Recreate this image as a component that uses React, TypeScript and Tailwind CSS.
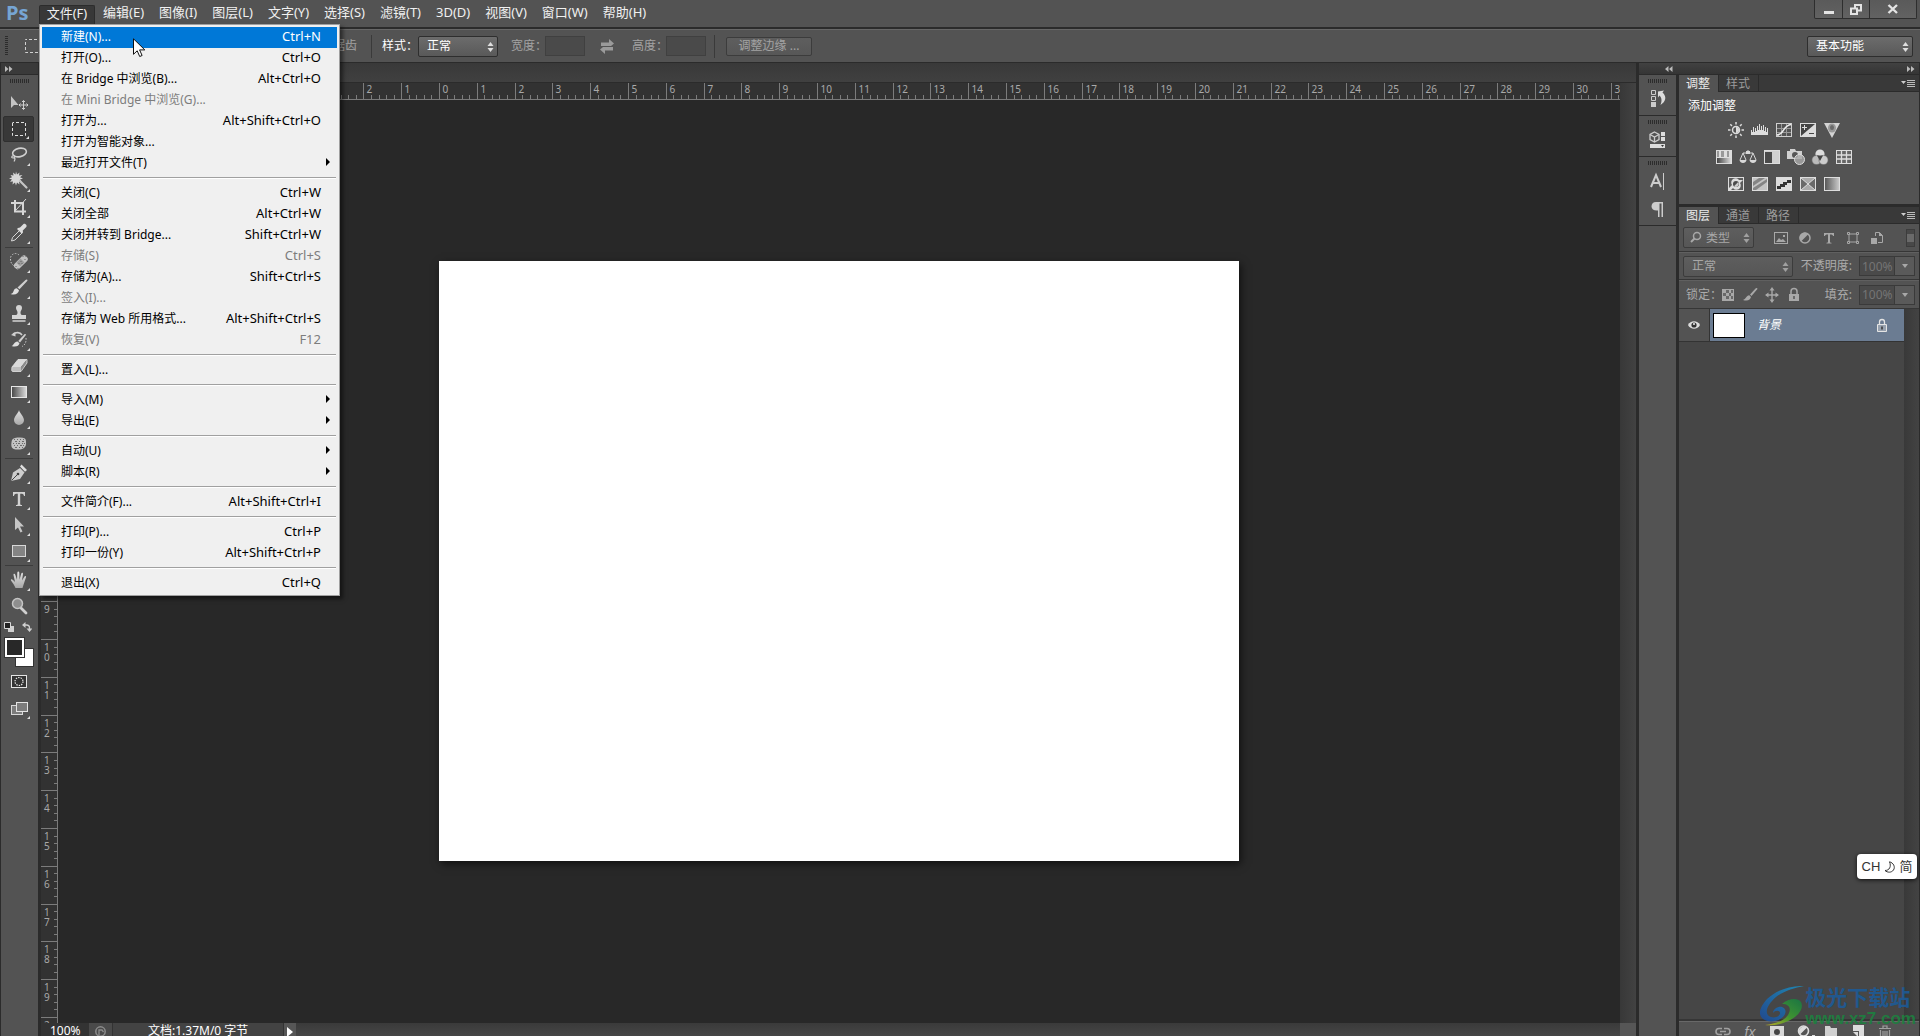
import { useId, type ReactNode } from "react";

/** Pixels per centimetre at 96 dpi and 100% zoom. */
const CM = 3780 / 100;

/** Distance from the start of each ruler to the document origin. */
const ORIGIN_X = 381;
const ORIGIN_Y = 161;

type MenuEntry = {
  label: string;
  keys?: string;
  disabled?: boolean;
  submenu?: boolean;
};

const MENU_TITLES = [
  "编辑(E)",
  "图像(I)",
  "图层(L)",
  "文字(Y)",
  "选择(S)",
  "滤镜(T)",
  "3D(D)",
  "视图(V)",
  "窗口(W)",
  "帮助(H)",
];

const FILE_MENU: MenuEntry[][] = [
  [
    { label: "新建(N)...", keys: "Ctrl+N" },
    { label: "打开(O)...", keys: "Ctrl+O" },
    { label: "在 Bridge 中浏览(B)...", keys: "Alt+Ctrl+O" },
    { label: "在 Mini Bridge 中浏览(G)...", disabled: true },
    { label: "打开为...", keys: "Alt+Shift+Ctrl+O" },
    { label: "打开为智能对象..." },
    { label: "最近打开文件(T)", submenu: true },
  ],
  [
    { label: "关闭(C)", keys: "Ctrl+W" },
    { label: "关闭全部", keys: "Alt+Ctrl+W" },
    { label: "关闭并转到 Bridge...", keys: "Shift+Ctrl+W" },
    { label: "存储(S)", keys: "Ctrl+S", disabled: true },
    { label: "存储为(A)...", keys: "Shift+Ctrl+S" },
    { label: "签入(I)...", disabled: true },
    { label: "存储为 Web 所用格式...", keys: "Alt+Shift+Ctrl+S" },
    { label: "恢复(V)", keys: "F12", disabled: true },
  ],
  [{ label: "置入(L)..." }],
  [
    { label: "导入(M)", submenu: true },
    { label: "导出(E)", submenu: true },
  ],
  [
    { label: "自动(U)", submenu: true },
    { label: "脚本(R)", submenu: true },
  ],
  [{ label: "文件简介(F)...", keys: "Alt+Shift+Ctrl+I" }],
  [
    { label: "打印(P)...", keys: "Ctrl+P" },
    { label: "打印一份(Y)", keys: "Alt+Shift+Ctrl+P" },
  ],
  [{ label: "退出(X)", keys: "Ctrl+Q" }],
];

/** Toolbox glyphs, each drawn on a 24x24 grid. */
const TOOL_GROUPS: { name: string; corner?: boolean; art: ReactNode }[][] = [
  [
    {
      name: "移动工具",
      corner: false,
      art: (
        <>
          <path d="M4 5v12l3-3h4.500z" fill="#c4c4c4" />
          <path
            d="M12 14h9M16.500 9.500v9M15 11l1.500-1.500L18 11M15 17l1.500 1.500L18 17M13.500 12.500L12 14l1.500 1.500M19.500 12.500L21 14l-1.500 1.500"
            stroke="#cfcfcf"
          />
        </>
      ),
    },
    {
      name: "矩形选框工具",
      art: <rect x="5.5" y="5.5" width="13" height="13" stroke="#e0e0e0" strokeDasharray="3 2" strokeDashoffset="1.5" />,
    },
    {
      name: "套索工具",
      art: (
        <g stroke="#d0d0d0" strokeWidth="1.600">
          <ellipse cx="12.500" cy="9.500" rx="7" ry="4.200" transform="rotate(-12 12.500 9.500)" />
          <path d="M6.500 12.500c-2 .5-2.500 2.500-.5 2.500s2-1.500.5-2.500M7.500 15c.8.800.5 2-.5 3.500" strokeWidth="1.200" />
        </g>
      ),
    },
    {
      name: "魔棒工具",
      art: (
        <>
          <path d="M9 2.500l1 3 2.500-2-.5 3 3.500-.5-2.500 2.300 3 1.200-3 1 2 2.300-3-.3.500 3-2.500-2-1 3-1-3-2.500 2 .5-3-3 .3 2-2.300-3-1 3-1.200L3.500 6l3 .5-.5-3 2.500 2z" fill="#d8d8d8" />
          <path d="M13 12l6.500 6.500" stroke="#c4c4c4" strokeWidth="2.200" strokeLinecap="round" />
        </>
      ),
    },
    {
      name: "裁剪工具",
      art: (
        <>
          <path d="M8 5v11.500h11M4 8h12v12" stroke="#d6d6d6" strokeWidth="2" />
          <path d="M9 15l10-11" stroke="#d6d6d6" />
        </>
      ),
    },
    {
      name: "吸管工具",
      art: (
        <>
          <path d="M4.500 20l1-3.500 7-7 2.500 2.500-7 7z" stroke="#d6d6d6" />
          <path d="M11 7l2-.5 3.500-3.500c1.500-1 4 1.200 2.800 3L15.800 9.500l.2 2-1.200 1.200L10 8z" fill="#dcdcdc" />
        </>
      ),
    },
  ],
  [
    {
      name: "污点修复画笔工具",
      art: (
        <>
          <path d="M12 5a5 5 0 00-8.500 4c0 3 1 5 3 6.500" stroke="#c8c8c8" strokeDasharray="1.500 1.500" />
          <rect x="5.500" y="9" width="16" height="7" rx="3" transform="rotate(-45 13.500 12)" fill="#c2c2c2" />
          <path d="M13.500 8.500l4 4-4.300 3.800-3.700-3.600z" fill="#9a9a9a" />
          <path d="M16 6v1M19 6v1M18 9v1M14 11v1M12 13v1M9 16v1M11 18v1M15 13v1" stroke="#666" />
        </>
      ),
    },
    {
      name: "画笔工具",
      art: (
        <>
          <path d="M20 3.500c.8.500.5 1.200 0 1.800l-7.500 8-2-1.700L18.500 4c.5-.5 1-.8 1.500-.5z" fill="#cfcfcf" />
          <path d="M9.800 12.200l2.200 2c-.5 3-3.500 5.500-8.500 3.800 2.500-.5 2.500-1.500 3.300-3.500.6-1.500 1.700-2.300 3-2.300z" fill="#e0e0e0" />
        </>
      ),
    },
    {
      name: "仿制图章工具",
      art: (
        <path d="M12 3a3 3 0 013 3c0 2-1.500 2.500-1.500 4.500 0 1.500.5 2.500 1.500 2.500h4v4H5v-4h4c1 0 1.500-1 1.500-2.500C10.500 8.500 9 8 9 6a3 3 0 013-3zM5.500 18.200h13v1.500h-13z" fill="#d4d4d4" />
      ),
    },
    {
      name: "历史记录画笔工具",
      art: (
        <>
          <path d="M6 6c3-2 7-2 9 1" stroke="#cfcfcf" strokeWidth="1.600" />
          <path d="M4 7l4.500-3v4.500z" fill="#cfcfcf" />
          <path d="M18.500 6c.6.500.5 1 0 1.500l-5.500 7-1.800-1.500 6-6.600c.5-.5 1-.6 1.300-.4z" fill="#cfcfcf" />
          <path d="M10.500 13.500l2 1.700c-.5 2.600-3.500 4.300-8 2.800 2.500-.5 2.500-4.500 6-4.500z" fill="#dedede" />
          <path d="M19 10c.5 4-1 7-4 8.500" stroke="#c8c8c8" strokeDasharray="1.500 1.500" />
        </>
      ),
    },
    {
      name: "橡皮擦工具",
      art: (
        <>
          <path d="M5 13l6-7.500h9L14 13z" fill="#dadada" />
          <path d="M5 13h9v4.500H6c-1.500 0-1.500-1-1-4.500z" fill="#bdbdbd" />
          <path d="M14 13l6-7.500v3.500l-6 8z" fill="#8c8c8c" />
          <path d="M5 13l6-7.500h9v3.500l-6 8.500H6c-1.500 0-1.500-1-1-4.500z" stroke="#e4e4e4" strokeWidth=".8" />
        </>
      ),
    },
    {
      name: "渐变工具",
      art: <rect x="4.5" y="6.5" width="15" height="11" fill="url(#ramp)" stroke="#e6e6e6" />,
    },
    {
      name: "模糊工具",
      art: <path d="M12 4c.5 3 5 6.500 5 10a5 5 0 01-10 0c0-3.500 4.500-7 5-10z" fill="url(#shade)" />,
    },
    {
      name: "海绵工具",
      art: (
        <>
          <path d="M5 8c1-2 4-2.500 8-2.500 4 0 6 1 6 3.500s.5 4-1 6-4 2.500-7 2.500-6-.5-6.500-3S4.500 10 5 8z" fill="#c2c2c2" />
          <path
            d="M7 7.500h1M10 7.500h1M13 7.500h1M16 7.500h1M8 9.500h2M12 9.500h1M15 9.500h2M6 11.500h1M9 11.500h1M11 11.500h2M15 11.500h1M17 11.500h1M7 13.500h1M10 13.500h1M13 13.500h2M16 13.500h1M8 15.500h2M12 15.500h1M15 15.500h1"
            stroke="#6c6c6c"
          />
        </>
      ),
    },
  ],
  [
    {
      name: "钢笔工具",
      art: (
        <>
          <path d="M4 20l2-8.500L13 7l4.500 4.500L13 18z" fill="#cdcdcd" />
          <path d="M14.500 3.500l5.500 5.500-2 1.800L13 5.500z" fill="#dedede" />
          <path d="M4.500 19.500l6-6" stroke="#444" />
          <circle cx="11" cy="13" r="1.300" fill="#444" />
        </>
      ),
    },
    {
      name: "横排文字工具",
      art: <path d="M6 5h12v4h-1c-.3-1.800-.8-2.300-3.800-2.300V17c0 .8.500 1 1.800 1v1H9v-1c1.300 0 1.800-.2 1.800-1V6.700C7.800 6.700 7.300 7.200 7 9H6z" fill="#d2d2d2" />,
    },
    {
      name: "路径选择工具",
      art: <path d="M8 4v13l3-2.500 2.500 5 2-1-2.500-5h4z" fill="#c6c6c6" />,
    },
    {
      name: "矩形工具",
      art: <rect x="5.5" y="6.5" width="13" height="11" fill="#848484" stroke="#d8d8d8" />,
    },
  ],
  [
    {
      name: "抓手工具",
      art: (
        <path d="M8.500 20c-1-3-3-5-4.500-7.500-.5-1.500 1-1.500 2-.5l2 2L6.500 7c-.2-1.500 1.300-1.700 1.800-.3l1.700 5 .3-7c.2-1.500 1.800-1.500 2 0l.2 7 1.700-6c.5-1.400 2-1 1.800.4L15 12.500l2.500-4c.7-1.200 2-.5 1.500.8-1 3.200-2 6-3.500 10.700z" fill="url(#shade)" />
      ),
    },
    {
      name: "缩放工具",
      corner: false,
      art: (
        <>
          <path d="M14 14l5 5" stroke="#d0d0d0" strokeWidth="2.800" strokeLinecap="round" />
          <circle cx="10.500" cy="9.500" r="5" fill="#8e8e8e" stroke="#c4c4c4" strokeWidth="1.500" />
        </>
      ),
    },
  ],
];

/** Adjustment layer glyphs on an 18x16 grid. */
const ADJUSTMENTS: { name: string; art: ReactNode }[][] = [
  [
    {
      name: "亮度/对比度",
      art: (
        <>
          <circle cx="9" cy="8" r="3.500" stroke="#ddd" strokeWidth="1.500" />
          <path d="M9 5v6a3 3 0 000-6z" fill="#ddd" />
          <path d="M9 0v2.500M9 13.500V16M1 8h2.500M14.500 8H17M3.300 2.300L5 4M13 12l1.700 1.700M14.700 2.300L13 4M5 12l-1.700 1.700" stroke="#ddd" strokeWidth="1.500" />
        </>
      ),
    },
    {
      name: "色阶",
      art: (
        <path d="M0 13V8h1v2h1V5h1v5h1V6h1v3h1V4h1v4h1V2h1v6h1V4h1v4h1V3h1v6h1V5h1v5h1V6h1v7z" fill="#ddd" />
      ),
    },
    {
      name: "曲线",
      art: (
        <>
          <rect x="1.500" y="1.500" width="15" height="13" stroke="#cfcfcf" />
          <path d="M6.500 2v12M11.500 2v12M2 6.500h14M2 10.500h14" stroke="#999" />
          <path d="M2 13c7 0 6-10 14-10.500" stroke="#eee" strokeWidth="1.500" />
        </>
      ),
    },
    {
      name: "曝光度",
      art: (
        <>
          <rect x="1.500" y="1.500" width="15" height="13" fill="#444" stroke="#ddd" />
          <path d="M2 14L16 2v12z" fill="#ddd" />
          <path d="M3 5.500h5M5.500 3v5" stroke="#ddd" />
          <path d="M10 11.500h5" stroke="#444" />
        </>
      ),
    },
    {
      name: "自然饱和度",
      art: (
        <>
          <path d="M1 1h16L9 16z" fill="#d4d4d4" />
          <ellipse cx="9" cy="6" rx="4" ry="4.500" fill="#999" />
          <ellipse cx="9" cy="5.500" rx="2" ry="2.500" fill="#6a6a6a" />
        </>
      ),
    },
  ],
  [
    {
      name: "色相/饱和度",
      art: (
        <>
          <rect x="1" y="1" width="16" height="14" fill="#ddd" />
          <path d="M2 2h2v6H2zM6 2h3v6H6zM12 2h2v6h-2z" fill="#999" />
          <rect x="2" y="9" width="14" height="5" fill="url(#ramp)" />
        </>
      ),
    },
    {
      name: "色彩平衡",
      art: (
        <>
          <path d="M9 1v3M4 4h10M4 4l-3 7M4 4l3 7M14 4l-3 7M14 4l3 7" stroke="#d8d8d8" />
          <path d="M.5 11h7c-.5 4-6.500 4-7 0zM10.500 11h7c-.5 4-6.500 4-7 0zM7 2h4v3H7z" fill="#d8d8d8" />
        </>
      ),
    },
    {
      name: "黑白",
      art: (
        <>
          <rect x="1.500" y="1.500" width="15" height="13" fill="#d0d0d0" stroke="#ddd" />
          <rect x="2" y="3" width="7" height="11" fill="#4a4a4a" />
        </>
      ),
    },
    {
      name: "照片滤镜",
      art: (
        <>
          <path d="M0 2h3V0h5l1 2h6v8H0z" fill="#d0d0d0" />
          <circle cx="8" cy="6" r="3" fill="#555" />
          <circle cx="12.500" cy="10.500" r="5" fill="#aaa" fillOpacity=".8" stroke="#ddd" />
        </>
      ),
    },
    {
      name: "通道混合器",
      art: (
        <>
          <circle cx="9" cy="5" r="4.600" fill="#ddd" />
          <circle cx="5.500" cy="11" r="4.600" fill="#bbb" stroke="#666" strokeWidth=".6" />
          <circle cx="12.500" cy="11" r="4.600" fill="#ccc" stroke="#666" strokeWidth=".6" />
          <path d="M6 6.500h6L9 12z" fill="#444" />
        </>
      ),
    },
    {
      name: "颜色查找",
      art: (
        <>
          <rect x="1.500" y="1.500" width="15" height="13" fill="#666" stroke="#ddd" />
          <path d="M6.500 2v12M11.500 2v12M2 6h14M2 10h14" stroke="#ddd" strokeWidth="1.300" />
        </>
      ),
    },
  ],
  [
    {
      name: "反相",
      art: (
        <>
          <rect x="1.500" y="1.500" width="15" height="13" fill="#5c5c5c" stroke="#ddd" />
          <path d="M2 14v-2l3-3a4 4 0 017-5h4l-3 3a4 4 0 01-7 5l-2 2z" fill="#ddd" />
          <circle cx="9" cy="8" r="3" fill="#4a4a4a" />
          <path d="M7 10.200L11.200 6a3 3 0 01-4.200 4.200z" fill="#ccc" />
        </>
      ),
    },
    {
      name: "色调分离",
      art: (
        <>
          <rect x="1.500" y="1.500" width="15" height="13" fill="#c4c4c4" stroke="#ddd" />
          <path d="M2 10L14 2H8L2 6zM2 14h3l11-8V3L2 12z" fill="#858585" />
        </>
      ),
    },
    {
      name: "阈值",
      art: (
        <>
          <rect x="1.500" y="1.500" width="15" height="13" fill="#ddd" stroke="#ddd" />
          <path d="M2 10h3V8h3V6h4V4h4v3h-4v2h-2v2H6v2H2z" fill="#333" />
        </>
      ),
    },
    {
      name: "可选颜色",
      art: (
        <>
          <rect x="1.500" y="1.500" width="15" height="13" fill="#aaa" stroke="#ddd" />
          <path d="M2 2l7 6-7 6zM16 2L9 8l7 6z" fill="#6a6a6a" />
          <path d="M2 2l14 12M16 2L2 14" stroke="#ddd" />
        </>
      ),
    },
    {
      name: "渐变映射",
      art: <rect x="1.500" y="1.500" width="15" height="13" fill="url(#rampFlip)" stroke="#ddd" />,
    },
  ],
];

/** Gradients shared by every glyph on the page. */
function SharedDefs() {
  return (
    <svg className="absolute size-0" aria-hidden="true">
      <defs>
        <linearGradient id="ramp">
          <stop offset="0" stopColor="#444" />
          <stop offset="1" stopColor="#ddd" />
        </linearGradient>
        <linearGradient id="rampFlip">
          <stop offset="0" stopColor="#555" />
          <stop offset="1" stopColor="#ccc" />
        </linearGradient>
        <linearGradient id="shade" x2="0" y2="1">
          <stop offset="0" stopColor="#e2e2e2" />
          <stop offset="1" stopColor="#a8a8a8" />
        </linearGradient>
      </defs>
    </svg>
  );
}

function Glyph({ w, h, className = "", children }: { w: number; h: number; className?: string; children: ReactNode }) {
  return (
    <svg width={w} height={h} viewBox={`0 0 ${w} ${h}`} fill="none" className={`shrink-0 ${className}`} aria-hidden="true">
      {children}
    </svg>
  );
}

function Grip() {
  return <div className="h-1 w-5 bg-[repeating-linear-gradient(90deg,#2c2c2c_0_1px,transparent_1px_2px)]" />;
}

/** Drop-down with the small up/down arrow pair on its right. */
function Picker({
  label,
  value,
  className,
  pad = "pl-2",
  muted,
}: {
  label: string;
  value: string;
  className: string;
  pad?: string;
  muted?: boolean;
}) {
  return (
    <div className={`relative h-[21px] shrink-0 ${className}`}>
      <select
        aria-label={label}
        className={`h-full w-full appearance-none rounded-xs border bg-linear-to-b ${pad} text-xs leading-none ${
          muted
            ? "border-[#3c3c3c] from-[#5e5e5e] to-[#565656] text-[#a8a8a8]"
            : "border-[#2e2e2e] from-[#6c6c6c] to-[#595959] text-white"
        }`}
      >
        <option>{value}</option>
      </select>
      <Glyph w={7} h={10} className={`pointer-events-none absolute top-[6px] right-[4px] ${muted ? "text-[#a0a0a0]" : "text-[#dedede]"}`}>
        <path d="M3.500 0L6.500 4h-6zM3.500 10L.5 6h6z" fill="currentColor" />
      </Glyph>
    </div>
  );
}

function FileMenu() {
  return (
    <div
      role="menu"
      className="absolute top-full left-0 z-20 w-[301px] border border-[#a0a0a0] bg-[#f0f0f0] px-[2px] pt-[2px] pb-px text-xs shadow-[3px_3px_4px_rgba(0,0,0,0.5)]"
    >
      {FILE_MENU.map((group, g) => (
        <div key={g}>
          {g > 0 && (
            <div className="h-[9px] pt-[3px]">
              <hr className="mx-px h-[2px] border-t border-b border-t-[#a0a0a0] border-b-white" />
            </div>
          )}
          {group.map((item, i) => (
            <button
              key={item.label}
              role="menuitem"
              disabled={item.disabled}
              className={`relative flex h-[21px] w-full items-center justify-between pr-4 pb-[2px] pl-[19px] ${
                g === 0 && i === 0 ? "bg-[#0078d7] text-white" : item.disabled ? "text-[#7d7d7d]" : "text-black"
              }`}
            >
              <span>{item.label}</span>
              {item.keys && <span className="text-[13px]">{item.keys}</span>}
              {item.submenu && (
                <Glyph w={4} h={8} className="absolute top-[5px] right-[7px]">
                  <path d="M0 0l4 4-4 4z" fill="#000" />
                </Glyph>
              )}
            </button>
          ))}
        </div>
      ))}
      <Glyph w={13} h={20} className="pointer-events-none absolute top-[13px] left-[93px]">
        <path d="M.5 .8v15.500l3.700-3.500 2.500 5.700 2.400-1-2.500-5.600h5.200z" fill="#fff" stroke="#111" />
      </Glyph>
    </div>
  );
}

function TitleBar() {
  return (
    <header className="flex h-[29px] shrink-0 items-start border-b-2 border-[#2b2b2b] bg-[#535353] text-[13px] text-[#f0f0f0]">
      <div className="h-[27px] w-[39px] pl-[6px] font-['Open_Sans',sans-serif] text-xl leading-[26px] font-bold text-[#76a5d3]">
        Ps
      </div>
      <nav className="flex pt-1">
        <div className="relative mr-px">
          <button className="h-[19px] w-14 rounded-t-xs border border-b-0 border-[#2c2c2c] bg-[#383838] pb-[3px] leading-none">
            文件(F)
          </button>
          <FileMenu />
        </div>
        {MENU_TITLES.map((title) => (
          <button key={title} className="h-[19px] pr-2 pb-[2px] pl-[7px] leading-none">
            {title}
          </button>
        ))}
      </nav>
      <div className="mr-[3px] ml-auto flex h-[19px] rounded-b-xs border border-t-0 border-[#2e2e2e] bg-linear-to-b from-[#5a5a5a] to-[#626262]">
        <button aria-label="最小化" className="flex w-7 items-center justify-center border-r border-[#2e2e2e]">
          <Glyph w={10} h={12}>
            <path d="M0 8h10v3H0z" fill="#e4e4e4" />
          </Glyph>
        </button>
        <button aria-label="还原" className="flex w-[27px] items-center justify-center border-r border-[#2e2e2e]">
          <Glyph w={12} h={11}>
            <path d="M5 1h6v5.500H5z" stroke="#e4e4e4" strokeWidth="2" />
            <path d="M1 4.500h6V10H1z" fill="#5c5c5c" stroke="#e4e4e4" strokeWidth="2" />
          </Glyph>
        </button>
        <button aria-label="关闭" className="flex w-[46px] items-center justify-center">
          <Glyph w={12} h={10}>
            <path d="M1.500 1l8.500 8M10 1L1.500 9" stroke="#e4e4e4" strokeWidth="2.400" />
          </Glyph>
        </button>
      </div>
    </header>
  );
}

function SizeBox({ label }: { label: string }) {
  const id = useId();
  return (
    <>
      <label htmlFor={id} className="w-[34px] whitespace-nowrap">
        {label}
      </label>
      <input id={id} disabled className="h-5 w-10 border border-[#404040] bg-[#4a4a4a] px-1" />
    </>
  );
}

function OptionsBar() {
  return (
    <div className="flex h-[34px] shrink-0 items-center border-t border-b border-t-[#676767] border-b-[#2b2b2b] bg-[#535353] pl-[5px] text-xs whitespace-nowrap text-[#a3a3a3]">
      <div className="h-5 w-[3px] bg-[repeating-linear-gradient(180deg,#2c2c2c_0_1px,transparent_1px_2px)]" />
      <Glyph w={15} h={14} className="ml-[17px]">
        <rect x=".5" y=".5" width="14" height="13" stroke="#d0d0d0" strokeDasharray="3 2" strokeDashoffset="1.500" />
      </Glyph>
      <span className="w-[317px] text-right">消除锯齿</span>
      <span className="mr-[10px] ml-[14px] h-[23px] w-px bg-[#3a3a3a]" />
      <span className="w-9 text-white">样式：</span>
      <Picker label="样式" value="正常" className="mr-[13px] w-20" />
      <SizeBox label="宽度：" />
      <button aria-label="高度和宽度互换" className="mx-[14px] w-[19px]">
        <Glyph w={16} h={15}>
          <path d="M2 3.500h8V0l5 4.500-3 2.500H2zM14 11.500H6V15L1 10.500 4 8h10z" fill="#9a9a9a" />
        </Glyph>
      </button>
      <SizeBox label="高度：" />
      <span className="mr-[11px] ml-2 h-[23px] w-px bg-[#3a3a3a]" />
      <button className="h-[19px] w-[86px] rounded-xs border border-[#3c3c3c] bg-linear-to-b from-[#5e5e5e] to-[#575757] leading-none">
        调整边缘 ...
      </button>
      <Picker label="工作区" value="基本功能" className="mr-[7px] ml-auto w-[106px]" />
    </div>
  );
}

function ToolButton({ name, corner = true, active, children }: { name: string; corner?: boolean; active?: boolean; children: ReactNode }) {
  return (
    <button
      aria-label={name}
      className={`relative flex h-[26px] w-[31px] items-center justify-center ${
        active ? "rounded-xs border border-[#2f2f2f] bg-[#383838]" : ""
      }`}
    >
      <Glyph w={24} h={24}>
        {children}
      </Glyph>
      {corner && (
        <Glyph w={3} h={3} className="absolute right-[4px] bottom-[2px]">
          <path d="M3 0v3H0z" fill="#ddd" />
        </Glyph>
      )}
    </button>
  );
}

function Toolbox() {
  return (
    <aside className="flex w-[41px] shrink-0 flex-col border-r-[3px] border-l border-[#2b2b2b] bg-[#535353]">
      <div className="flex h-3 shrink-0 items-center border-b border-[#2b2b2b] bg-[#3a3a3a] pl-1">
        <Glyph w={8} h={6}>
          <path d="M0 0l3.500 3L0 6zM4 0l3.500 3L4 6z" fill="#bbb" />
        </Glyph>
      </div>
      <div className="flex h-[15px] shrink-0 justify-center pt-1">
        <Grip />
      </div>
      {TOOL_GROUPS.map((group, g) => (
        <div key={g} className="flex flex-col items-center pr-[2px]">
          {g > 0 && <hr className="my-px w-7 border-[#3c3c3c]" />}
          {group.map((tool) => (
            <ToolButton key={tool.name} name={tool.name} corner={tool.corner} active={tool.name === "矩形选框工具"}>
              {tool.art}
            </ToolButton>
          ))}
        </div>
      ))}
      <div className="flex h-[15px] shrink-0 items-center justify-between pr-[6px] pl-[3px]">
        <button aria-label="默认前景色和背景色">
          <Glyph w={10} h={10}>
            <path d="M4 4h6v6H4z" fill="#d0d0d0" />
            <path d="M.5 .5h6v6h-6z" fill="#222" stroke="#d8d8d8" />
          </Glyph>
        </button>
        <button aria-label="切换前景色和背景色">
          <Glyph w={10} h={10}>
            <path d="M2 3h2.500A3 3 0 017.500 6v2" stroke="#cfcfcf" strokeWidth="1.300" />
            <path d="M3.500 0v6L0 3zM4.500 6.500h6l-3 3.500z" fill="#cfcfcf" />
          </Glyph>
        </button>
      </div>
      <div className="grid shrink-0 grid-cols-[10px_9px_10px] grid-rows-[10px_9px_10px] self-start pt-1 pl-1">
        <button aria-label="背景色" className="col-span-2 col-start-2 row-span-2 row-start-2 border border-[#333] bg-white" />
        <button
          aria-label="前景色"
          className="col-span-2 col-start-1 row-span-2 row-start-1 border-2 border-white bg-[#282828] outline outline-[#333]"
        />
      </div>
      <div className="mt-[2px] flex flex-col items-center pr-[2px]">
        <ToolButton name="以快速蒙版模式编辑" corner={false}>
          <rect x="4.500" y="5.500" width="15" height="12" fill="#333" stroke="#e4e4e4" />
          <circle cx="12" cy="11.500" r="4" stroke="#eee" strokeWidth="1.200" strokeDasharray="1.400 1.100" />
        </ToolButton>
        <ToolButton name="更改屏幕模式">
          <rect x="4.500" y="9.500" width="11" height="9" fill="#7c7c7c" stroke="#d8d8d8" />
          <rect x="9.500" y="6.500" width="11" height="9" fill="#7c7c7c" stroke="#e4e4e4" />
        </ToolButton>
      </div>
    </aside>
  );
}

function range(from: number, to: number) {
  return Array.from({ length: to - from + 1 }, (_, i) => from + i);
}

const MINOR = [1, 2, 3, 4];

function HorizontalRuler() {
  return (
    <svg className="h-[17px] w-full min-w-0 border-b border-[#7a7a7a] bg-[#323232] font-['Noto_Sans',sans-serif] text-[10px]">
      {range(-3, 31).map((n) => {
        const x = Math.round(ORIGIN_X + n * CM) + 0.5;
        return (
          <g key={n} stroke="#7c7c7c">
            <path d={`M${x} 0v16`} />
            {MINOR.map((m) => {
              const mx = Math.round(ORIGIN_X + (n + m / 5) * CM) + 0.5;
              return <path key={m} d={`M${mx} 12v4`} />;
            })}
            <text x={x + 3} y={10} fill="#a9a9a9" stroke="none">
              {Math.abs(n)}
            </text>
          </g>
        );
      })}
    </svg>
  );
}

function VerticalRuler() {
  return (
    <svg className="h-full w-[17px] shrink-0 border-r border-[#7a7a7a] bg-[#323232] font-['Noto_Sans',sans-serif] text-[10px]">
      {range(9, 20).map((n) => {
        const y = Math.round(ORIGIN_Y + n * CM) + 0.5;
        return (
          <g key={n} stroke="#7c7c7c">
            <path d={`M0 ${y}h16`} />
            {MINOR.map((m) => {
              const my = Math.round(ORIGIN_Y + (n + m / 5) * CM) + 0.5;
              return <path key={m} d={`M13 ${my}h3`} />;
            })}
            {[...String(n)].map((digit, i) => (
              <text key={i} x={3} y={y + 11 + i * 10} fill="#a9a9a9" stroke="none">
                {digit}
              </text>
            ))}
          </g>
        );
      })}
    </svg>
  );
}

function StatusBar() {
  return (
    <div className="flex h-[13px] shrink-0 overflow-hidden bg-[#434343] text-xs leading-4 text-white">
      <span className="w-12 bg-[#333] pl-[9px]">100%</span>
      <button aria-label="文档预览" className="flex w-6 justify-center border-r border-[#333] bg-[#4a4a4a] pt-[3px]">
        <Glyph w={11} h={11}>
          <circle cx="5.500" cy="5.500" r="4.700" stroke="#8c8c8c" strokeWidth="1.500" />
          <path d="M4 9V4h3l1.500 2" stroke="#8c8c8c" strokeWidth="1.300" />
        </Glyph>
      </button>
      <span className="w-[170px] pl-[35px] whitespace-nowrap">文档:1.37M/0 字节</span>
      <button aria-label="状态栏选项" className="flex w-[13px] justify-center border-l border-[#333] bg-[#565656] pt-1">
        <Glyph w={6} h={10}>
          <path d="M0 0l6 5-6 5z" fill="#fff" />
        </Glyph>
      </button>
      <span className="flex-1 bg-linear-to-b from-[#3a3a3a] to-[#464646]" />
      <span className="w-4 bg-[#565656]" />
    </div>
  );
}

function DocumentWindow() {
  return (
    <main className="flex min-w-0 flex-1 flex-col">
      <div className="h-5 shrink-0 border-b border-[#2b2b2b] bg-linear-to-b from-[#393939] to-[#404040]" />
      <div className="flex min-h-0 flex-1">
        <div className="flex min-w-0 flex-1 flex-col">
          <div className="flex shrink-0">
            <div className="w-[17px] shrink-0 border-r border-b border-[#7a7a7a] bg-[#323232]" />
            <HorizontalRuler />
          </div>
          <div className="flex min-h-0 flex-1">
            <VerticalRuler />
            <div className="flex min-w-0 flex-1 items-center justify-center overflow-hidden bg-[#282828] pb-[2px]">
              <div className="h-[600px] w-[800px] shrink-0 bg-white shadow-[2px_3px_8px_rgba(0,0,0,0.6)]" />
            </div>
          </div>
        </div>
        <div className="w-4 shrink-0 bg-linear-to-r from-[#383838] to-[#424242]" />
      </div>
      <StatusBar />
    </main>
  );
}

function DockGroup({ items }: { items: { name: string; art: ReactNode }[] }) {
  return (
    <div className="flex flex-col items-center gap-1 border-b border-[#2b2b2b] py-1">
      <Grip />
      {items.map((item) => (
        <button key={item.name} aria-label={item.name} className="flex h-6 w-8 items-center justify-center">
          <Glyph w={18} h={18}>{item.art}</Glyph>
        </button>
      ))}
    </div>
  );
}

function IconDock() {
  return (
    <div className="w-10 shrink-0 border-r-[3px] border-[#2b2b2b] bg-[#535353]">
      <DockGroup
        items={[
          {
            name: "历史记录",
            art: (
              <>
                <path d="M2.500 .5h4v4h-4zM2.500 6.500h4v4h-4z" stroke="#ccc" />
                <path d="M2 12h5v5H2z" fill="#ccc" />
                <path d="M9 1.500l6-1-1.500 2c4.500 4 3.500 9-2 12.500 1.500-4 1.500-7-1-9.500L9 7.500z" fill="#ddd" />
              </>
            ),
          },
        ]}
      />
      <DockGroup
        items={[
          {
            name: "属性",
            art: (
              <>
                <path d="M5.500 1l4.500 2.500v5L5.500 11 1 8.500v-5z" stroke="#ccc" strokeWidth="1.300" />
                <path d="M1 3.500L5.500 6 10 3.500M5.500 6v5" stroke="#ccc" strokeWidth="1.300" />
                <path d="M12 1h4v4h-4zM12 6h4v4h-4zM1 13h15v4H1z" fill="#ddd" />
                <path d="M12 14h3l-1.500 2z" fill="#333" />
              </>
            ),
          },
        ]}
      />
      <DockGroup
        items={[
          {
            name: "字符",
            art: (
              <>
                <path d="M2 15L7 3l5 12M4 11h6.500" stroke="#ccc" strokeWidth="2" />
                <path d="M14.500 1v17" stroke="#ccc" />
              </>
            ),
          },
          {
            name: "段落",
            art: <path d="M7 2h7v15h-1.500V3.500H10.500V17H9v-6.500C5 11 2.500 9 2.500 6.500S4 2 7 2z" fill="#ccc" />,
          },
        ]}
      />
    </div>
  );
}

function PanelTabs({ tabs }: { tabs: string[] }) {
  return (
    <div className="flex h-[17px] shrink-0 bg-[#393939] text-xs leading-[17px]">
      {tabs.map((tab, i) => (
        <button
          key={tab}
          className={`w-10 border-r border-[#2b2b2b] pr-px whitespace-nowrap ${
            i === 0 ? "bg-[#535353] text-[#ececec]" : "border-b text-[#9c9c9c]"
          }`}
        >
          {tab}
        </button>
      ))}
      <div className="flex flex-1 items-center justify-end border-b border-[#2b2b2b] pr-1">
        <button aria-label="面板菜单">
          <Glyph w={14} h={9}>
            <path d="M0 2h5L2.500 5z" fill="#ccc" />
            <path d="M6 1.500h8M6 3.500h8M6 5.500h8M6 7.500h8" stroke="#bbb" />
          </Glyph>
        </button>
      </div>
    </div>
  );
}

function AdjustmentsPanel() {
  return (
    <section className="flex h-[132px] shrink-0 flex-col border-b-[3px] border-[#2b2b2b]">
      <PanelTabs tabs={["调整", "样式"]} />
      <h2 className="h-[30px] pl-[9px] text-xs leading-[27px] text-white">添加调整</h2>
      <div className="flex flex-col gap-[11px] pr-[31px]">
        {ADJUSTMENTS.map((row, i) => (
          <div key={i} className="flex justify-center gap-[6px]">
            {row.map((item) => (
              <button key={item.name} aria-label={item.name}>
                <Glyph w={18} h={16}>{item.art}</Glyph>
              </button>
            ))}
          </div>
        ))}
      </div>
    </section>
  );
}

function PercentBox({ label }: { label: string }) {
  const id = useId();
  return (
    <div className="ml-auto flex items-center">
      <label htmlFor={id} className="mr-[7px]">
        {label}
      </label>
      <input
        id={id}
        disabled
        defaultValue="100%"
        className="h-5 w-9 border border-[#3a3a3a] bg-[#4a4a4a] pl-[2px] text-[#757575]"
      />
      <button aria-label={`${label}选项`} className="flex h-5 w-5 items-center justify-center border border-l-0 border-[#3a3a3a] bg-[#5a5a5a]">
        <Glyph w={6} h={4}>
          <path d="M0 0h6L3 4z" fill="#a8a8a8" />
        </Glyph>
      </button>
    </div>
  );
}

const FILTERS: { name: string; art: ReactNode }[] = [
  {
    name: "像素图层滤镜",
    art: (
      <>
        <rect x=".5" y="1.500" width="13" height="11" stroke="#a8a8a8" />
        <path d="M2 11l3-4 2 2 2-1 3 3zM9 4h2v2H9z" fill="#a8a8a8" />
      </>
    ),
  },
  {
    name: "调整图层滤镜",
    art: (
      <>
        <circle cx="7" cy="7" r="5" stroke="#a8a8a8" strokeWidth="1.500" />
        <path d="M3 10.500L10.500 3A5 5 0 003 10.500z" fill="#a8a8a8" />
      </>
    ),
  },
  {
    name: "文字图层滤镜",
    art: <path d="M2 2h10v3h-1c-.2-1-.6-1.500-3-1.500V11c0 .6.500.8 1.500.8v.7h-5v-.7c1 0 1.500-.2 1.500-.8V3.500C3.600 3.500 3.200 4 3 5H2z" fill="#a8a8a8" />,
  },
  {
    name: "形状图层滤镜",
    art: (
      <>
        <path d="M3 3h8v8H3z" stroke="#a8a8a8" />
        <path d="M1.500 1.500h2v2h-2zM10.500 1.500h2v2h-2zM1.500 10.500h2v2h-2zM10.500 10.500h2v2h-2z" fill="#535353" stroke="#a8a8a8" />
      </>
    ),
  },
  {
    name: "智能对象滤镜",
    art: (
      <>
        <path d="M5.500 5V1.500h4l3 3v7H8" stroke="#a8a8a8" />
        <path d="M1 7h6v6H1zM9 1v4h4z" fill="#a8a8a8" />
      </>
    ),
  },
];

const LOCKS: { name: string; art: ReactNode }[] = [
  {
    name: "锁定透明像素",
    art: (
      <>
        <path d="M2 2h12v12H2z" fill="#a8a8a8" />
        <path d="M6 3h3v3H6zM11 3h2v3h-2zM3 6h3v3H3zM9 6h2v3H9zM6 9h3v3H6zM11 9h2v3h-2z" fill="#686868" />
      </>
    ),
  },
  {
    name: "锁定图像像素",
    art: (
      <path d="M15 1c.8.500.3 1.300-.2 1.800L9.500 9 8 7.500 13.500 1.500c.5-.5 1-.8 1.500-.5zM7.300 8.300L9 10c-.5 2.500-3 4.500-8 3 3-.5 3-4.500 6.300-4.700z" fill="#a8a8a8" />
    ),
  },
  {
    name: "锁定位置",
    art: (
      <>
        <path d="M8 2v12M2 8h12" stroke="#a8a8a8" strokeWidth="1.400" />
        <path d="M8 0l2.500 3.500h-5zM8 16l2.500-3.500h-5zM1 8l3.500-2.500v5zM15 8l-3.500-2.500v5z" fill="#a8a8a8" />
      </>
    ),
  },
  {
    name: "锁定全部",
    art: (
      <>
        <path d="M5 8V4.500a3 3 0 016 0V8" stroke="#a8a8a8" strokeWidth="1.500" />
        <path d="M3 7h10v7H3z" fill="#a8a8a8" />
        <path d="M8 9v3" stroke="#555" strokeWidth="1.500" />
      </>
    ),
  },
];

const LAYER_ACTIONS: { name: string; art: ReactNode }[] = [
  {
    name: "链接图层",
    art: <path d="M7 4.500H4a3 3 0 000 6h3M9 4.500h3a3 3 0 010 6H9M5 7.500h6" stroke="#a0a0a0" strokeWidth="1.600" />,
  },
  { name: "添加图层样式", art: null },
  {
    name: "添加图层蒙版",
    art: (
      <>
        <path d="M1 2h14v12H1z" fill="#d8d8d8" />
        <circle cx="8" cy="8" r="3" fill="#444" />
      </>
    ),
  },
  {
    name: "创建新的填充或调整图层",
    art: (
      <>
        <circle cx="7.500" cy="7" r="5" stroke="#dcdcdc" strokeWidth="1.600" />
        <path d="M4 10.500l7-7a5 5 0 00-7 7z" fill="#dcdcdc" />
        <path d="M16 11h3v3h-3z" fill="#ddd" />
      </>
    ),
  },
  { name: "创建新组", art: <path d="M2 2h5l1 2h6v10H2z" fill="#d0d0d0" /> },
  {
    name: "创建新图层",
    art: <path d="M3 1h11v13H9V7H3zM3 8h5v5z" fill="#dcdcdc" />,
  },
  {
    name: "删除图层",
    art: <path d="M2 4.500h12M6 4V2h4v2M3.500 6v9h9V6M6 7v8M8 7v8M10 7v8" stroke="#a0a0a0" strokeWidth="1.200" />,
  },
];

function LayersPanel() {
  return (
    <section className="flex min-h-0 flex-1 flex-col text-xs text-[#ababab]">
      <PanelTabs tabs={["图层", "通道", "路径"]} />

      <div className="flex h-7 shrink-0 items-center border-b border-[#363636] pr-1 pl-1">
        <div className="relative">
          <Picker label="图层滤镜类型" value="类型" className="w-[71px]" pad="pl-[22px]" muted />
          <Glyph w={12} h={12} className="pointer-events-none absolute top-[4px] left-[7px]">
            <circle cx="7" cy="5" r="3.500" stroke="#a8a8a8" strokeWidth="1.500" />
            <path d="M4.500 7.500L1 11" stroke="#a8a8a8" strokeWidth="2" />
          </Glyph>
        </div>
        <div className="ml-5 flex gap-[10px]">
          {FILTERS.map((f) => (
            <button key={f.name} aria-label={f.name}>
              <Glyph w={14} h={14}>{f.art}</Glyph>
            </button>
          ))}
        </div>
        <button aria-label="打开或关闭图层滤镜" className="ml-auto h-[18px] w-[9px] border border-[#3c3c3c] bg-[#484848]">
          <span className="block h-2 bg-[#6a6a6a]" />
        </button>
      </div>

      <div className="flex h-7 shrink-0 items-center border-t border-b border-t-[#606060] border-b-[#363636] pr-1 pl-1">
        <Picker label="混合模式" value="正常" className="w-[110px]" muted />
        <PercentBox label="不透明度:" />
      </div>

      <div className="flex h-7 shrink-0 items-center border-t border-t-[#606060] pr-1 pl-[7px] whitespace-nowrap">
        <span className="w-[34px]">锁定：</span>
        <div className="flex gap-[6px]">
          {LOCKS.map((l) => (
            <button key={l.name} aria-label={l.name}>
              <Glyph w={16} h={16}>{l.art}</Glyph>
            </button>
          ))}
        </div>
        <PercentBox label="填充:" />
      </div>

      <div className="flex min-h-0 flex-1 border-t border-b-2 border-[#363636] bg-[#464646]">
        <div className="flex-1">
          <div className="flex h-[33px] border-b border-[#333]">
            <button aria-label="指示图层可见性" className="flex w-[31px] items-center justify-center border-r border-[#333] bg-[#535353]">
              <Glyph w={12} h={10}>
                <path d="M0 5c2.500-5 9.500-5 12 0-2.500 5-9.500 5-12 0z" fill="#ddd" />
                <circle cx="6" cy="5" r="2.600" fill="#333" />
                <circle cx="6" cy="4" r="1" fill="#eee" />
              </Glyph>
            </button>
            <div className="flex flex-1 items-center bg-[#6b7c92] pr-4 pl-[3px] text-white">
              <span className="h-[25px] w-8 border border-black bg-white" />
              <span className="ml-3 italic">背景</span>
              <Glyph w={12} h={14} className="ml-auto">
                <path d="M3.500 6V4a2.500 2.500 0 015 0v2" stroke="#e4e4e4" strokeWidth="1.300" />
                <path d="M1.500 6.500h9v7h-9z" fill="#97a1ae" stroke="#e4e4e4" />
                <path d="M6 8.500v3" stroke="#333" strokeWidth="1.500" />
              </Glyph>
            </div>
          </div>
        </div>
        <div className="w-[15px] bg-linear-to-r from-[#393939] to-[#434343]" />
      </div>

      <div className="flex h-[15px] shrink-0 gap-[11px] overflow-hidden border-t border-[#686868] pt-[2px] pl-9">
        {LAYER_ACTIONS.map((a) => (
          <button key={a.name} aria-label={a.name} className="h-4 w-4 font-['Liberation_Sans',sans-serif] text-sm leading-4 italic">
            {a.art ? (
              <Glyph w={16} h={16} className="overflow-visible">
                {a.art}
              </Glyph>
            ) : (
              "fx"
            )}
          </button>
        ))}
      </div>
    </section>
  );
}

function RightDock() {
  return (
    <aside className="flex w-[284px] shrink-0 flex-col border-r border-l-[3px] border-[#2b2b2b] bg-[#535353]">
      <div className="flex h-3 shrink-0 items-center justify-between border-b border-[#2b2b2b] bg-linear-to-b from-[#414141] to-[#353535] pr-1 pl-[26px]">
        <Glyph w={8} h={6}>
          <path d="M3.500 0L0 3l3.500 3zM7.500 0L4 3l3.500 3z" fill="#bbb" />
        </Glyph>
        <Glyph w={8} h={6}>
          <path d="M0 0l3.500 3L0 6zM4 0l3.500 3L4 6z" fill="#bbb" />
        </Glyph>
      </div>
      <div className="flex min-h-0 flex-1">
        <IconDock />
        <div className="flex min-w-0 flex-1 flex-col">
          <AdjustmentsPanel />
          <LayersPanel />
        </div>
      </div>
    </aside>
  );
}

/** Input method indicator floating over the lower right corner. */
function ImeBadge() {
  return (
    <div className="absolute right-[3px] bottom-[157px] flex h-[25px] w-[60px] items-center justify-center gap-1 rounded-sm bg-white font-['Liberation_Sans','Noto_Sans_CJK_SC',sans-serif] text-[13px] text-[#333] shadow-[0_1px_4px_rgba(0,0,0,0.8)]">
      <span>CH</span>
      <Glyph w={11} h={12}>
        <path d="M5.500 .8c4 1 6 5.200 4 8.200-2 2.800-6 2.800-8.500.5 4.500 0 6.500-4 4.500-8.700z" stroke="#333" />
      </Glyph>
      <span>简</span>
    </div>
  );
}

function SiteMark() {
  return (
    <div className="pointer-events-none absolute right-1 bottom-2 flex items-center opacity-90">
      <Glyph w={46} h={44}>
        <defs>
          <linearGradient id="swooshBlue" x1="1" x2="0" y2="1">
            <stop offset="0" stopColor="#1b8fc0" />
            <stop offset="1" stopColor="#1d4a96" />
          </linearGradient>
          <linearGradient id="swooshGreen" x1="1" x2="0" y2="1">
            <stop offset="0" stopColor="#167a44" />
            <stop offset=".5" stopColor="#3d9a30" />
            <stop offset="1" stopColor="#c8b820" />
          </linearGradient>
        </defs>
        <path d="M45 2C31 1 16 7 8 15c-8 9-9 16-4 20 5 4 15 3 20-2 4-4 3-9-1-10-5-1-9 3-9 6 2-3 7-3 7 0 0 4-7 6-11 3C5 28 9 20 17 13 25 7 35 4 45 2z" fill="url(#swooshBlue)" />
        <path d="M23 20c6-5 15-7 19-2 3 6-2 13-9 17-8 5-18 7-27 6 10-1 19-4 23-10 4-7 1-11-6-11z" fill="url(#swooshGreen)" />
      </Glyph>
      <div className="flex flex-col">
        <span className="text-[21px] leading-[25px] font-bold text-[#1d5a96]">极光下载站</span>
        <span className="font-['Liberation_Sans',sans-serif] text-[17px] leading-[18px] font-bold text-[#1e8040]">www.xz7.com</span>
      </div>
    </div>
  );
}

export default function App() {
  return (
    <div className="relative flex h-screen flex-col overflow-hidden bg-[#2b2b2b] font-['Noto_Sans','Noto_Sans_CJK_SC',sans-serif] select-none">
      <SharedDefs />
      <TitleBar />
      <OptionsBar />
      <div className="flex min-h-0 flex-1">
        <Toolbox />
        <DocumentWindow />
        <RightDock />
      </div>
      <SiteMark />
      <ImeBadge />
    </div>
  );
}
